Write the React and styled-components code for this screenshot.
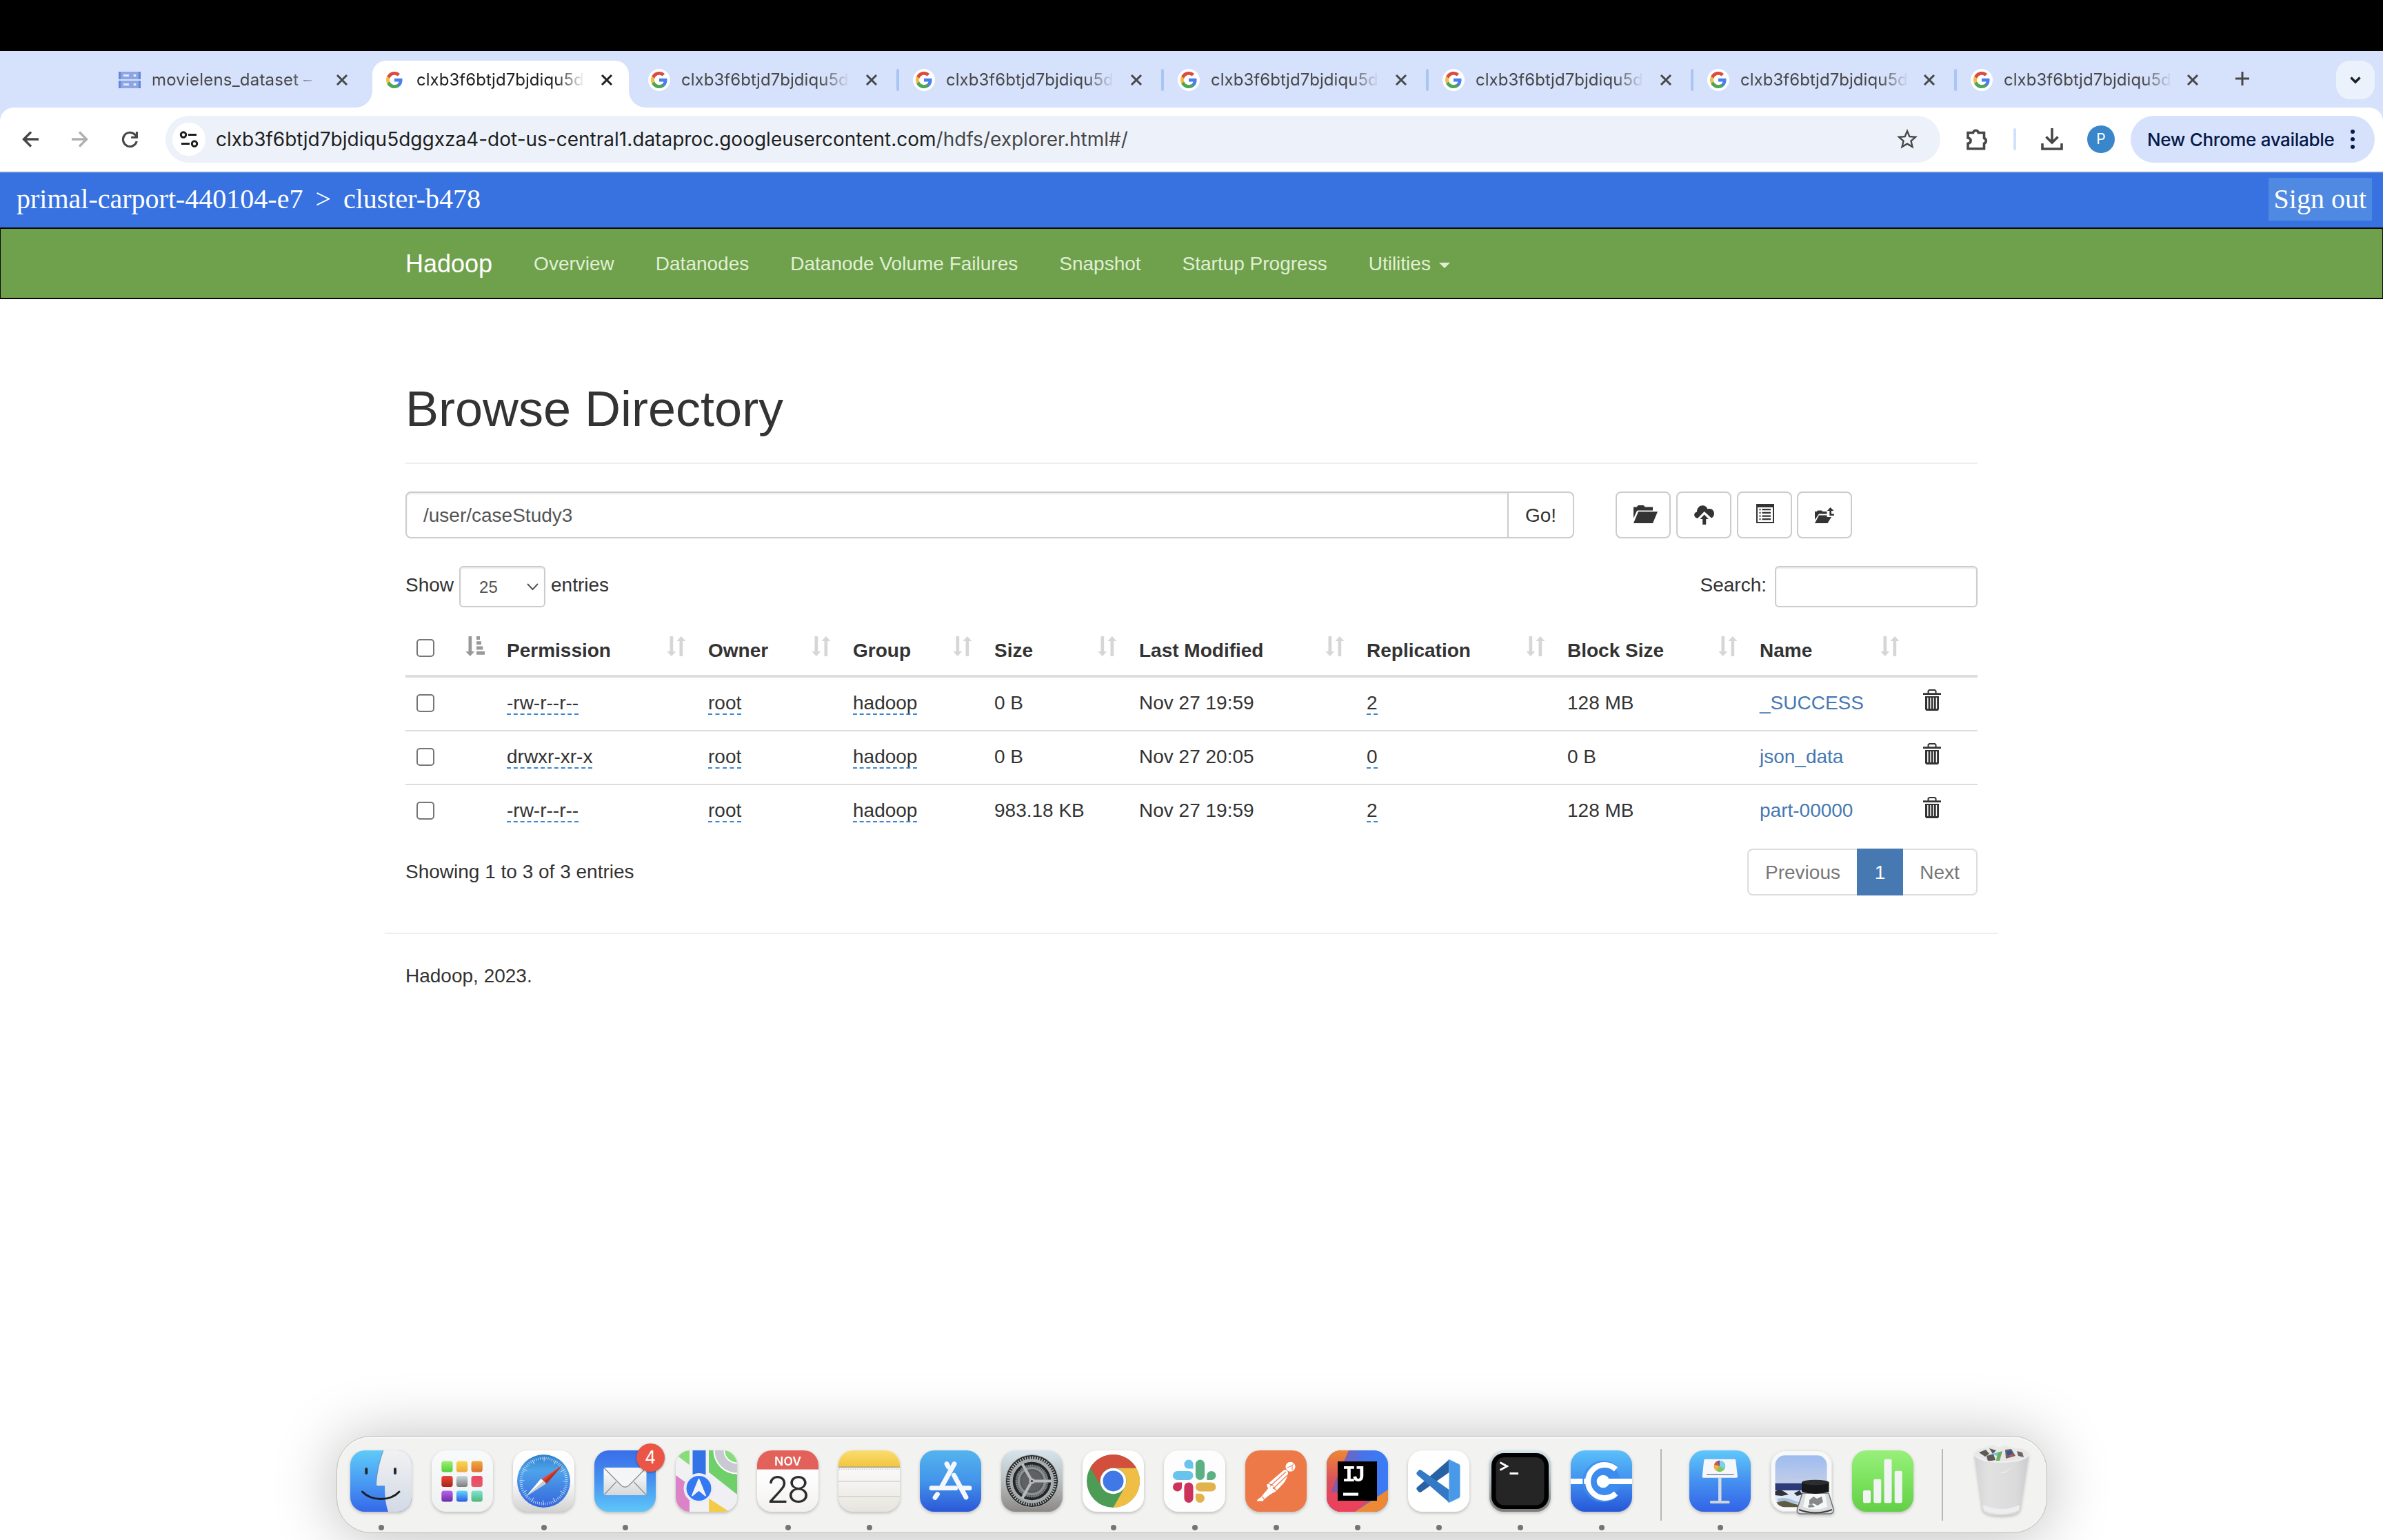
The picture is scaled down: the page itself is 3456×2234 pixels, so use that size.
import React from "react";
import styled, { createGlobalStyle, css } from "styled-components";

const sans = `"Liberation Sans", Arial, sans-serif`;
const system = `Inter, "Liberation Sans", sans-serif`;
const serif = `"Liberation Serif", "Times New Roman", serif`;

const GlobalStyle = createGlobalStyle`
  *, *::before, *::after { box-sizing: border-box; }
  body { margin: 0; background: #fff; color: #333; font: 28px/41px ${sans}; }
  svg { display: block; flex: none; overflow: visible; }
`;

const Screen = styled.div`
  display: flex;
  flex-direction: column;
  height: 2234px;
  overflow: hidden;
`;

const MenuBar = styled.div`
  flex: none;
  height: 74px;
  background: #000;
`;

/* ---------- browser chrome ---------- */

const TabStrip = styled.div`
  flex: none;
  display: flex;
  height: 82px;
  padding: 14px 12px 0 150px;
  background: #d6e1fb;
  font-family: ${system};
`;

const Tab = styled.div`
  position: relative;
  isolation: isolate;
  display: flex;
  align-items: center;
  width: ${(p) => p.$width}px;
  height: 56px;
  color: ${(p) => (p.$active ? "#1f1f1f" : "#474747")};
  ${(p) =>
    p.$active &&
    css`
      &::before {
        content: "";
        position: absolute;
        z-index: -1;
        inset: 0 6px -12px;
        border-radius: 20px 20px 0 0;
        background: #fff;
      }
      &::after {
        content: "";
        position: absolute;
        z-index: -2;
        inset: auto -18px -12px;
        height: 24px;
        background:
          radial-gradient(circle at 0 0, transparent 23.5px, #fff 24px) left / 24px 24px no-repeat,
          radial-gradient(circle at 100% 0, transparent 23.5px, #fff 24px) right / 24px 24px no-repeat;
      }
    `}
`;

const Divider = styled.span`
  flex: none;
  width: 4px;
  height: 32px;
  margin-left: -2px;
  border-radius: 2px;
  background: ${(p) => (p.$visible ? "#a9c5f7" : "transparent")};
`;

const Favicon = styled.span`
  flex: none;
  display: grid;
  place-items: center;
  width: 32px;
  height: 32px;
  margin: 0 16px 0 20px;
  border-radius: 50%;
  background: ${(p) => (p.$plain ? "transparent" : "#fff")};
`;

const TabTitle = styled.span`
  flex: none;
  width: 244px;
  overflow: hidden;
  white-space: nowrap;
  font-size: 24px;
  line-height: 32px;
  letter-spacing: ${(p) => p.$spacing}px;
  padding-bottom: 1px;
  mask-image: linear-gradient(to right, #000 calc(100% - 42px), transparent);
`;

const TabClose = styled.span`
  display: grid;
  margin: 0 30px 0 auto;
`;

const NewTab = styled.span`
  display: grid;
  place-items: center;
  width: 67px;
  height: 52px;
`;

const TabSearch = styled.span`
  display: grid;
  place-items: center;
  width: 56px;
  height: 56px;
  margin-left: auto;
  border-radius: 20px;
  background: #ebf2fc;
`;

const ToolbarBack = styled.div`
  flex: none;
  background: #d6e1fb;
`;

const Toolbar = styled.div`
  display: flex;
  align-items: center;
  height: 94px;
  padding: 0 12px 0 32px;
  border-bottom: 2px solid #e1e3e1;
  border-radius: 20px 20px 0 0;
  background: #fff;
  font-family: ${system};
`;

const ToolButton = styled.span`
  flex: none;
  display: grid;
  place-items: center;
  width: ${(p) => p.$width}px;
`;

const Omnibox = styled.div`
  display: flex;
  align-items: center;
  width: 2574px;
  height: 68px;
  margin-left: 39px;
  padding: 0 30px 0 10px;
  border-radius: 34px;
  background: #edf2fa;
`;

const SiteInfo = styled.span`
  display: grid;
  place-items: center;
  width: 48px;
  height: 48px;
  margin-right: 15px;
  border-radius: 50%;
  background: #fff;
`;

const Url = styled.span`
  flex: 1;
  font-size: 28px;
  color: #1f1f1f;
`;

const UrlPath = styled.span`
  color: #474747;
`;

const ToolDivider = styled.span`
  width: 4px;
  height: 32px;
  border-radius: 2px;
  background: #d3e0fb;
`;

const Avatar = styled.span`
  display: grid;
  place-items: center;
  width: 40px;
  height: 40px;
  border-radius: 50%;
  background: #3a86cb;
  color: #fff;
  font-size: 21px;
  line-height: 40px;
`;

const UpdatePill = styled.span`
  display: flex;
  align-items: center;
  justify-content: space-between;
  width: 354px;
  height: 68px;
  margin-left: auto;
  padding: 0 29px 0 24px;
  border-radius: 34px;
  background: #d6e1fb;
  color: #061a48;
  font-size: 26px;
  font-weight: 500;
  letter-spacing: -0.33px;
  white-space: nowrap;
`;

/* ---------- proxied page header ---------- */

const GatewayBar = styled.header`
  flex: none;
  display: flex;
  align-items: center;
  justify-content: space-between;
  height: 80px;
  padding: 0 16px 2px 24px;
  background: #3872e0;
  color: #fff;
  font: 40px/62px ${serif};
`;

const Breadcrumb = styled.div`
  display: flex;
  gap: 18px;
`;

const SignOut = styled.a`
  padding: 0 8px;
  background: #5089e1;
`;

const Navbar = styled.nav`
  flex: none;
  display: flex;
  align-items: center;
  height: 104px;
  padding-left: 586px;
  border: 2px solid #080808;
  border-width: 2px 1px;
  background: #6fa14c;
  color: #e0efd4;
`;

const Brand = styled.a`
  margin-right: 60px;
  padding-left: 1px;
  color: #fff;
  font-size: 36px;
`;

const NavLink = styled.a`
  display: flex;
  align-items: center;
  gap: 12px;
  margin-right: 60px;
`;

const Caret = styled.span`
  margin-top: 6px;
  border: 8px solid transparent;
  border-top-color: currentColor;
  border-bottom: 0;
`;

/* ---------- page body ---------- */

const Container = styled.main`
  flex: none;
  width: 2340px;
  margin: 0 auto;
  padding: 120px 30px 0;
`;

const PageTitle = styled.h1`
  margin: 0 0 40px;
  padding-bottom: 38px;
  border-bottom: 2px solid #eee;
  font-size: 72px;
  font-weight: 400;
  line-height: 79px;
`;

const PathRow = styled.div`
  display: flex;
  height: 68px;
`;

const field = css`
  border: 2px solid #ccc;
  background: #fff;
  box-shadow: inset 0 2px 2px rgba(0, 0, 0, 0.075);
  color: #555;
`;

const PathField = styled.div`
  ${field}
  width: 1600px;
  padding: 12px 24px;
  border-radius: 8px 0 0 8px;
`;

const GoButton = styled.button`
  width: 97px;
  margin: 0 60px 0 -2px;
  padding: 1px 0 0;
  border: 2px solid #ccc;
  border-radius: 0 8px 8px 0;
  background: #fff;
  color: #333;
  font: 28px/41px ${sans};
`;

const IconButton = styled.button`
  display: grid;
  place-items: start center;
  width: 80px;
  margin-right: ${(p) => p.$gap || 8}px;
  padding: ${(p) => p.$top}px 0 0 ${(p) => p.$left || 0}px;
  border: 2px solid #ccc;
  border-radius: 8px;
  background: #fff;
`;

const ControlsRow = styled.div`
  display: flex;
  justify-content: space-between;
  margin: 40px 0 26px;
`;

const ControlLabel = styled.label`
  display: flex;
  align-items: flex-start;
  gap: ${(p) => p.$gap}px;
`;

const LabelText = styled.span`
  margin-top: 7px;
`;

const LengthSelect = styled.span`
  ${field}
  display: flex;
  align-items: center;
  justify-content: space-between;
  width: 125px;
  height: 60px;
  padding: 0 8px 0 27px;
  border-radius: 6px;
  font-size: 24px;
`;

const SearchField = styled.span`
  ${field}
  width: 294px;
  height: 60px;
  border-radius: 6px;
`;

const columns = "131px 292px 210px 205px 210px 330px 291px 279px 235px 97px";

const HeadRow = styled.div`
  display: grid;
  grid-template-columns: ${columns};
  height: 76px;
  border-bottom: 4px solid #ddd;
  font-weight: 700;
`;

const HeadCell = styled.div`
  display: flex;
  justify-content: space-between;
  padding: 16px 16px 0 16px;
`;

const Row = styled.div`
  display: grid;
  grid-template-columns: ${columns};
  height: ${(p) => (p.$first ? 76 : 78)}px;
  border-top: ${(p) => (p.$first ? 0 : 2)}px solid #ddd;
`;

const Cell = styled.div`
  padding: 16px 0 0 16px;
`;

const TrashCell = styled.div`
  padding: 17px 0 0 18px;
`;

const Checkbox = styled.span`
  display: block;
  width: 26px;
  height: 26px;
  margin-top: ${(p) => p.$top}px;
  border: 2px solid #767676;
  border-radius: 5px;
  background: #fff;
`;

const Editable = styled.span`
  display: inline-block;
  height: 38px;
  border-bottom: 2px dashed #3a86cf;
`;

const FileLink = styled.a`
  color: #4678b2;
`;

const TableFooter = styled.div`
  display: flex;
  justify-content: space-between;
  padding: 16px 0 54px;
`;

const Info = styled.div`
  padding-top: 13px;
`;

const Pagination = styled.div`
  display: flex;
`;

const PageButton = styled.a`
  width: ${(p) => p.$width}px;
  height: 68px;
  border: 2px solid ${(p) => (p.$active ? "#4678b2" : "#ddd")};
  border-left-width: ${(p) => (p.$side === "right" ? 0 : 2)}px;
  border-right-width: ${(p) => (p.$side === "left" ? 0 : 2)}px;
  border-radius: ${(p) => (p.$side === "left" ? "8px 0 0 8px" : p.$side === "right" ? "0 8px 8px 0" : "0")};
  background: ${(p) => (p.$active ? "#4678b2" : "#fff")};
  color: ${(p) => (p.$active ? "#fff" : "#777")};
  line-height: 66px;
  text-align: center;
`;

const Footer = styled.footer`
  margin: 0 -30px;
  padding: 40px 30px 0;
  border-top: 2px solid #eee;
`;

/* ---------- dock ---------- */

const DockBar = styled.div`
  flex: none;
  display: flex;
  width: 2481px;
  height: 141px;
  margin: auto auto 10px;
  padding-left: 5px;
  border: 1px solid #bebebc;
  border-radius: 50px;
  background: #f2f2f0;
  box-shadow: inset 0 2px 1px #fafaf9, 0 4px 90px rgba(0, 0, 0, 0.27);
`;

const DockSlot = styled.div`
  position: relative;
  display: flex;
  flex-direction: column;
  align-items: center;
  width: 118px;
  padding-top: ${(p) => p.$top || 20}px;
  svg { filter: drop-shadow(0 2px 2px rgba(0, 0, 0, 0.22)); }
`;

const RunningDot = styled.span`
  width: 8px;
  height: 8px;
  margin-top: 19px;
  border-radius: 50%;
  background: #757573;
`;

const DockDivider = styled.span`
  width: 2px;
  height: 104px;
  margin: 18px 26px 0;
  background: #b7b7b5;
`;

const Badge = styled.span`
  position: absolute;
  top: 10px;
  left: 75px;
  width: 41px;
  height: 41px;
  border-radius: 50%;
  background: #ea5546;
  box-shadow: 0 1px 3px rgba(0, 0, 0, 0.4);
  color: #fff;
  font: 25px/41px ${system};
  text-align: center;
`;

/* ---------- small icons ---------- */

const Line = ({ w = 24, h = 24, color = "#474747", sw = 3.4, d, box }) => (
  <svg width={w} height={h} viewBox={box || `0 0 ${w} ${h}`} fill="none" stroke={color} strokeWidth={sw}>
    <path d={d} />
  </svg>
);

const GoogleG = () => (
  <svg width="24" height="24" viewBox="1 1 22 22">
    <path fill="#4a80ee" d="M22.56 12.25c0-.78-.07-1.53-.2-2.25H12v4.26h5.92c-.26 1.37-1.04 2.53-2.21 3.31v2.77h3.57c2.08-1.92 3.28-4.74 3.28-8.09z" />
    <path fill="#50a556" d="M12 23c2.97 0 5.46-.98 7.28-2.66l-3.57-2.77c-.98.66-2.23 1.06-3.71 1.06-2.86 0-5.29-1.93-6.16-4.53H2.18v2.84C3.99 20.53 7.7 23 12 23z" />
    <path fill="#f4bd42" d="M5.84 14.09c-.22-.66-.35-1.36-.35-2.09s.13-1.43.35-2.09V7.07H2.18C1.43 8.55 1 10.22 1 12s.43 3.45 1.18 4.93l2.85-2.22.81-.62z" />
    <path fill="#db4c3e" d="M12 5.38c1.62 0 3.06.56 4.21 1.64l3.15-3.15C17.45 2.09 14.97 1 12 1 7.7 1 3.99 3.47 2.18 7.07l3.66 2.84c.87-2.6 3.3-4.53 6.16-4.53z" />
  </svg>
);

const ServerIcon = () => (
  <svg width="32" height="24" viewBox="0 0 32 24">
    {[0, 13].map((y) => (
      <g key={y}>
        <rect y={y} width="32" height="11" fill="#8da5e3" />
        <rect y={y} width="3" height="11" fill="#6286d9" />
        <rect x="29" y={y} width="3" height="11" fill="#6286d9" />
        <rect x="7" y={y + 4} width="8" height="3" fill="#e3eafb" />
        <circle cx="23.5" cy={y + 5.5} r="2" fill="#e3eafb" />
      </g>
    ))}
  </svg>
);

const ReloadIcon = () => (
  <svg width="25" height="25" viewBox="0 0 26 26" fill="none" stroke="#474747" strokeWidth="3.2">
    <path d="M23.2 15.5A10.5 10.5 0 1 1 20.6 5.6L23 8" />
    <path d="M23.3 1v8.6h-8.6" />
  </svg>
);

const TuneIcon = () => (
  <svg width="26" height="24" viewBox="0 0 26 24" fill="none" stroke="#1f1f1f" strokeWidth="3">
    <circle cx="5" cy="5.5" r="3.7" />
    <path d="M12 5.5h12M2 18.500h12" />
    <circle cx="21" cy="18.5" r="3.7" />
  </svg>
);

const StarIcon = () => (
  <svg width="36" height="36" viewBox="0 0 24 24" fill="#474747">
    <path d="M22 9.24l-7.19-.62L12 2 9.19 8.63 2 9.24l5.46 4.73L5.82 21 12 17.27 18.18 21l-1.63-7.03L22 9.240zM12 15.4l-3.76 2.27 1-4.28-3.32-2.88 4.38-.38L12 6.1l1.71 4.04 4.38.38-3.32 2.88 1 4.28L12 15.4z" />
  </svg>
);

const PuzzleIcon = () => (
  <Line w={32} h={32} sw={3.6} d="M3 6.500h7.500a4 4.200 0 0 1 7.800 0H26.500v8a4 4 0 0 1 0 7.600V29.800H3v-7.500c5.500-1 5.500-7.400 0-8.400z" />
);

const DownloadIcon = () => <Line w={32} h={32} sw={3.6} d="M16 0v20M7.500 12.500L16 21l8.500-8.500M2 22v8h28v-8" />;

const DotsIcon = () => (
  <svg width="6" height="28" viewBox="0 0 6 28" fill="#061a48">
    <circle cx="3" cy="3" r="3" />
    <circle cx="3" cy="14" r="3" />
    <circle cx="3" cy="25" r="3" />
  </svg>
);

const FolderOpen = () => (
  <svg width="35" height="26" viewBox="0 0 35 26" fill="#333">
    <path d="M0 19V2.500h5Q5.500 0 7.500 0h6.500q2 0 2.500 2.500H28V7.500H6.500Q5 7.500 4.500 9z" />
    <path d="M7 9.300H35L28 26H0z" />
  </svg>
);

const CloudUpload = () => (
  <svg width="29" height="28" viewBox="0 0 29 28" fill="#333">
    <path d="M5 19C-1 18-1.500 10.500 4 9.500 4-.5 16-3 19.500 5.500 25.500 3.500 29 8 29 11.500c0 3.500-1.500 6-4 7L14.700 9 5 19z" />
    <path d="M14.700 13.500l6.200 6.500h-3.700v8h-5v-8H8.500z" />
  </svg>
);

const ListAlt = () => (
  <svg width="26" height="28" viewBox="0 0 26 28">
    <path fill="#333" d="M0 0h26v28H0z" />
    <path fill="#fff" d="M2 5h22v21H2z" />
    <path fill="#333" d="M4.500 7h2v2.300h-2zM8.500 7H21v2.300H8.500zM4.500 11.700h2V14h-2zM8.500 11.700H21V14H8.500zM4.500 16.400h2v2.300h-2zM8.500 16.400H21v2.300H8.500zM4.500 21h2v2.300h-2zM8.500 21H21v2.300H8.500z" />
  </svg>
);

const FolderUp = () => (
  <svg width="28" height="23" viewBox="0 0 28 23" fill="#333">
    <path d="M0 18V6h3q.5-1.500 1.500-1.500h5q1.200 0 1.700 1.500h6.300v3.500H6z" />
    <path d="M6 11.500h11.500v2.500H24L18.500 23H0z" />
    <path d="M22.500 0l5 5h-3.500v4.500h3.800V12h-6.500V5h-3.500z" />
  </svg>
);

const SortIcon = () => (
  <svg width="28" height="29" viewBox="0 0 28 29" fill="#d6d6d6">
    <path d="M4.500 0H9.200v22H13.300L6.800 29 .3 22h4.200zM18.500 29h4.700V7h4.200L20.900 0 14.400 7h4.100z" />
  </svg>
);

const SortAscIcon = () => (
  <svg width="28" height="29" viewBox="0 0 28 29" fill="#999">
    <path d="M4.500 0H9.200v22H13.300L6.800 29 .3 22h4.200zM16 0h5v5h-5zM16 7.300h7v5h-7zM16 14.500h9.300v5H16zM16 21.800h12v5H16z" />
  </svg>
);

const TrashIcon = () => (
  <svg width="26" height="31" viewBox="0 0 26 31">
    <path fill="none" stroke="#333" strokeWidth="2" d="M7.500 6V2.500L9 1h8l1.500 1.500V6" />
    <path fill="#333" d="M0 5.200h26V8H0zM3 10h20v19l-1.500 2h-17L3 29z" />
    <path stroke="#fff" strokeWidth="1.500" d="M6.800 12v16M11 12v16M15.200 12v16M19.400 12v16" />
  </svg>
);

/* ---------- dock icons ---------- */

const Tile = ({ id, stops, fill, children, text }) => (
  <svg width="89" height="89" viewBox="0 0 89 89">
    <defs>
      <clipPath id={`${id}-clip`}>
        <rect width="89" height="89" rx="21" />
      </clipPath>
      {stops && (
        <linearGradient id={`${id}-bg`} x2="0" y2="1">
          {stops.map((s, i) => (
            <stop key={i} offset={i / (stops.length - 1)} stopColor={s} />
          ))}
        </linearGradient>
      )}
    </defs>
    <g clipPath={`url(#${id}-clip)`}>
      <rect width="89" height="89" fill={stops ? `url(#${id}-bg)` : fill} />
      {children}
    </g>
    {text}
  </svg>
);

const Finder = () => (
  <Tile id="finder" stops={["#5fcaf8", "#4a9cf3", "#3568ea"]}>
    <linearGradient id="finder-face" x2="0" y2="1">
      <stop stopColor="#f1f1f3" />
      <stop offset="1" stopColor="#d2dae6" />
    </linearGradient>
    <path d="M48 0C42 16 38 35 37.500 50q0 1.800 2 1.800H50C50 66 51.500 79 55 89H89V0z" fill="url(#finder-face)" />
    <path d="M48 0C42 16 38 35 37.500 50q0 1.800 2 1.800H50" fill="none" stroke="#3d6c9c" strokeWidth=".6" />
    <path d="M23.300 27v6M65 27v6" stroke="#23292f" strokeWidth="4" strokeLinecap="round" />
    <path d="M17.500 60C31 74 58 74 71 60" fill="none" stroke="#1b1f24" strokeWidth="3" strokeLinecap="round" />
  </Tile>
);

const launchColors = [
  ["#9df072", "#54cf3c"], ["#f7d850", "#efa93a"], ["#f0ab3d", "#dd7031"],
  ["#e8483b", "#a92418"], ["#ccd6dc", "#7b7d7d"], ["#ea4662", "#e65b6a"],
  ["#ba63e8", "#6a2da8"], ["#62d6fb", "#2c5be2"], ["#7fe3d3", "#4fb679"],
];

const Launchpad = () => (
  <Tile id="launch" stops={["#f8fafb", "#f0f1f1"]}>
    {launchColors.map(([a, b], i) => (
      <g key={i}>
        <linearGradient id={`lp${i}`} x2="0" y2="1">
          <stop stopColor={a} />
          <stop offset="1" stopColor={b} />
        </linearGradient>
        <rect x={14.300 + (i % 3) * 21.600} y={15.500 + Math.floor(i / 3) * 21.500} width="16.300" height="16" rx="3.500" fill={`url(#lp${i})`} />
      </g>
    ))}
  </Tile>
);

const Safari = () => (
  <Tile id="safari" stops={["#ffffff", "#fbfbfb", "#d2d2d2"]}>
    <linearGradient id="safari-dial" x2="0" y2="1">
      <stop stopColor="#2f7fcb" />
      <stop offset=".3" stopColor="#4ea3ea" />
      <stop offset="1" stopColor="#3565dc" />
    </linearGradient>
    <circle cx="44.500" cy="44.500" r="38.500" fill="url(#safari-dial)" />
    <circle cx="44.500" cy="44.500" r="33" fill="none" stroke="#cfe2f7" strokeWidth="4" strokeDasharray=".8 2.080" />
    <circle cx="44.500" cy="44.500" r="31.500" fill="none" stroke="#cfe2f7" strokeWidth="7" strokeDasharray=".9 15.590" />
    <path d="M71.500 21.700L40 42.500l4.500 2z" fill="#ec6150" />
    <path d="M71.500 21.700L47.500 49.500l-7-6.500z" fill="#df4433" />
    <path d="M71.500 21.700L48 49l-3.500-4z" fill="#b23127" />
    <path d="M18.400 67.300L40.500 41l4 3.500z" fill="#fff" />
    <path d="M18.400 67.300L48.500 48l-4-3.800z" fill="#c6ccd6" />
  </Tile>
);

const Mail = () => (
  <Tile id="mail" stops={["#3a6de9", "#4693f0", "#5fc6f9"]}>
    <linearGradient id="mail-paper" x2="0" y2="1">
      <stop stopColor="#ffffff" />
      <stop offset="1" stopColor="#d5d7d9" />
    </linearGradient>
    <rect x="13.500" y="25" width="62" height="40" rx="3" fill="url(#mail-paper)" />
    <path d="M14.500 64l17-18M74.500 64l-17-18" stroke="#8d8f92" strokeWidth="1.200" />
    <path d="M14.500 26L39 51q5.500 4.500 11 0L74.500 26" fill="#f5f5f5" stroke="#8d8f92" strokeWidth="1.400" />
  </Tile>
);

const Maps = () => (
  <Tile id="maps" fill="#f1f1f4">
    <path d="M0 0H21V22L0 6z" fill="#88dd7a" />
    <path d="M46 0H89V66L46 32z" fill="#6fd069" />
    <path d="M0 36L22 52V89H0z" fill="#dc82c6" />
    <path d="M47 69L78 89H47z" fill="#f3cb48" />
    <path d="M46 30L89 64V89H80L46 62z" fill="#efeff4" />
    <circle cx="89" cy="0" r="26" fill="none" stroke="#fff" strokeWidth="17" />
    <circle cx="89" cy="0" r="26" fill="none" stroke="#c9c9d4" strokeWidth="13" />
    <circle cx="89" cy="0" r="17" fill="#88dd7a" />
    <path d="M20 0H48V89H20z" fill="#f1f1f4" />
    <path d="M24.500 0H43.500V50H24.500z" fill="#3273e6" />
    <circle cx="33.500" cy="55" r="22" fill="#eceef5" />
    <circle cx="33.500" cy="55" r="18" fill="#3478f2" />
    <path d="M33.500 42L43 65.500l-9.500-8-9.500 8z" fill="#f2f3f6" stroke="#f2f3f6" strokeWidth="2" strokeLinejoin="round" />
  </Tile>
);

const Calendar = () => (
  <Tile
    id="cal"
    stops={["#ffffff", "#fcfcfc", "#f2f1ee"]}
    text={
      <g textAnchor="middle" fontFamily={system}>
        <text x="44.500" y="21.500" fontSize="17.500" fontWeight="600" fill="#fff">NOV</text>
        <text x="43.500" y="75.500" fontSize="54" fontWeight="300" letterSpacing="-3" fill="#2d2d2d">28</text>
      </g>
    }
  >
    <rect width="89" height="27.600" fill="#e2615a" />
  </Tile>
);

const Notes = () => (
  <Tile id="notes" stops={["#ffffff", "#f5f4f1", "#e6e4dd"]}>
    <linearGradient id="notes-top" x2="0" y2="1">
      <stop stopColor="#f9dd70" />
      <stop offset="1" stopColor="#f3c63e" />
    </linearGradient>
    <rect width="89" height="23.500" fill="url(#notes-top)" />
    <rect y="23.300" width="89" height="1.700" fill="#a99f7c" />
    <path d="M1 27.200H89" stroke="#b8b6b0" strokeWidth="1.300" strokeDasharray="1.300 2" />
    <path d="M0 44.700H89M0 66.700H89" stroke="#d2d1cd" strokeWidth="1.600" />
  </Tile>
);

const AppStore = () => (
  <Tile id="store" stops={["#54b4ee", "#4394ea", "#2b58d8"]}>
    <g stroke="#f4f8fd" strokeWidth="6.800" strokeLinecap="round" fill="none">
      <path d="M39 19.500L41.500 24M49.500 36l17.500 32" />
      <path d="M50 19.500L31 54M25.500 63.500L22 68.500" />
      <path d="M17 54.700H52M62 54.700H72" />
    </g>
  </Tile>
);

const Settings = () => (
  <Tile id="settings" stops={["#d6e5ec", "#b9bfc1", "#8b8884"]}>
    <circle cx="44.500" cy="44.500" r="38.500" fill="#a4a8a9" />
    <circle cx="44.500" cy="44.500" r="37.500" fill="#242526" />
    <circle cx="44.500" cy="44.500" r="34" fill="none" stroke="#b4babc" strokeWidth="4" strokeDasharray="1.700 1.860" />
    <circle cx="44.500" cy="44.500" r="30" fill="none" stroke="#a7acad" strokeWidth="4.500" />
    <circle cx="44.500" cy="44.500" r="23.500" fill="#55585a" />
    <circle cx="44.500" cy="44.500" r="22.500" fill="none" stroke="#85898a" strokeWidth="3" strokeDasharray="1.500 1.200" />
    <circle cx="44.500" cy="44.500" r="19" fill="none" stroke="#8c9091" strokeWidth="3.500" />
    <circle cx="44.500" cy="44.500" r="15" fill="#5f6162" />
    <path d="M44.500 44.500H73M44.500 44.500L30.500 19.500M44.500 44.500L30.500 69.500" stroke="#b6bbbd" strokeWidth="4" />
    <circle cx="44.500" cy="44.500" r="4" fill="#b6bbbd" />
    <circle cx="44.500" cy="44.500" r="1.600" fill="#333" />
  </Tile>
);

const Chrome = () => (
  <Tile id="chrome" fill="#fff">
    <circle cx="44.500" cy="44.500" r="38.500" fill="#4d9c55" />
    <path d="M44.500 25.500H78A38.500 38.500 0 0 1 44.500 83L61 54A19 19 0 0 0 44.500 25.500z" fill="#f0bd45" />
    <path d="M28 54L11.300 25A38.500 38.500 0 0 1 78 25.500H44.500A19 19 0 0 0 28 54z" fill="#d24e3d" />
    <circle cx="44.500" cy="44.500" r="18.800" fill="#fff" />
    <circle cx="44.500" cy="44.500" r="15" fill="#4078e6" />
  </Tile>
);

const Slack = () => (
  <Tile id="slack" fill="#fdfdfd">
    <g transform="translate(13 13.500) scale(2.600)">
      <path fill="#cb335a" d="M5.042 15.165a2.528 2.528 0 0 1-2.520 2.523A2.528 2.528 0 0 1 0 15.165a2.527 2.527 0 0 1 2.522-2.520h2.520v2.520zM6.313 15.165a2.527 2.527 0 0 1 2.521-2.520 2.527 2.527 0 0 1 2.521 2.520v6.313A2.528 2.528 0 0 1 8.834 24a2.528 2.528 0 0 1-2.521-2.522v-6.313z" />
      <path fill="#68c4ec" d="M8.834 5.042a2.528 2.528 0 0 1-2.521-2.520A2.528 2.528 0 0 1 8.834 0a2.528 2.528 0 0 1 2.521 2.522v2.520H8.834zM8.834 6.313a2.528 2.528 0 0 1 2.521 2.521 2.528 2.528 0 0 1-2.521 2.521H2.522A2.528 2.528 0 0 1 0 8.834a2.528 2.528 0 0 1 2.522-2.521h6.312z" />
      <path fill="#5cb184" d="M18.956 8.834a2.528 2.528 0 0 1 2.522-2.521A2.528 2.528 0 0 1 24 8.834a2.528 2.528 0 0 1-2.522 2.521h-2.522V8.834zM17.688 8.834a2.528 2.528 0 0 1-2.523 2.521 2.527 2.527 0 0 1-2.520-2.521V2.522A2.527 2.527 0 0 1 15.165 0a2.528 2.528 0 0 1 2.523 2.522v6.312z" />
      <path fill="#e2b34d" d="M15.165 18.956a2.528 2.528 0 0 1 2.523 2.522A2.528 2.528 0 0 1 15.165 24a2.527 2.527 0 0 1-2.520-2.522v-2.522h2.520zM15.165 17.688a2.527 2.527 0 0 1-2.520-2.523 2.526 2.526 0 0 1 2.520-2.520h6.313A2.527 2.527 0 0 1 24 15.165a2.528 2.528 0 0 1-2.522 2.523h-6.313z" />
    </g>
  </Tile>
);

const Postman = () => (
  <Tile id="postman" fill="#ed7848">
    <circle cx="65.500" cy="23.700" r="7" fill="#fff" />
    <path d="M61 25l7-3 3.500-4.500M68 22v7" stroke="#ed7848" strokeWidth="1" fill="none" />
    <path d="M56 28.500q5-1 6 4-1 8-6 14.500L45 59l-9 5-10 8 .5 1.500h-10l2-3 3.500-2L33 55.500l-2-5.500z" fill="#fff" />
    <path d="M59 31L36 52M61 36L40 56M33 48l8 3M40 53l6 6M24 67l3 3" stroke="#ed7848" strokeWidth="1.200" fill="none" />
  </Tile>
);

const IntelliJ = () => (
  <Tile
    id="ij"
    fill="#3a7cf6"
    text={
      <text x="22.500" y="45" fontFamily={`"Liberation Mono", monospace`} fontWeight="700" fontSize="33" letterSpacing="-5.500" fill="#fff">IJ</text>
    }
  >
    <linearGradient id="ij-left" x2="0" y2="1">
      <stop stopColor="#ee8733" />
      <stop offset=".5" stopColor="#d9505f" />
      <stop offset="1" stopColor="#ee3e5b" />
    </linearGradient>
    <linearGradient id="ij-mid" x2="1">
      <stop stopColor="#a3508e" />
      <stop offset=".6" stopColor="#4574ea" />
      <stop offset="1" stopColor="#3a7cf6" />
    </linearGradient>
    <rect width="89" height="89" fill="url(#ij-mid)" />
    <path d="M0 0H32L6 60l60 10L41 89H0z" fill="url(#ij-left)" />
    <path d="M89 57L41 89H89z" fill="#ee8834" />
    <rect x="16" y="16" width="57" height="57" fill="#000" />
    <rect x="24" y="61.500" width="22" height="4.200" fill="#fff" />
  </Tile>
);

const VSCode = () => (
  <Tile id="vscode" fill="#fff">
    <path d="M59.500 13.500V32L19 60.500q-2 1-3.500-.5L12.700 57q-1.200-1.800.5-3.500z" fill="#2962a4" />
    <path d="M59.500 75.500V57L19 28.500q-2-1-3.500.5L12.700 32q-1.200 1.800.5 3.500z" fill="#3479c6" />
    <path d="M57 14l3-.8L74 20q1.500 1 1.500 3V66q0 2-1.500 3L60 75.800 57 75q2.500-.5 2.500-3.500v-54Q59.500 14.500 57 14z" fill="#4a99e9" />
  </Tile>
);

const Terminal = () => (
  <Tile id="term" stops={["#d5e5ec", "#a9b5ba", "#7d7a7a"]}>
    <rect x="3" y="4" width="83" height="81" rx="18" fill="#000" />
    <rect x="9.500" y="10" width="70" height="69.500" rx="12" fill="#252525" />
    <path d="M15.500 17.500L25.500 23l-10 5.500M29.500 33.500H42" fill="none" stroke="#fff" strokeWidth="3" />
  </Tile>
);

const CApp = () => (
  <Tile id="capp" stops={["#5ac0fa", "#4190ee", "#2656d9"]}>
    <rect y="41" width="89" height="8" fill="#fff" />
    <circle cx="47" cy="45" r="25" fill="#3c8bee" />
    <path d="M66 23A29 29 0 1 0 66 67" fill="none" stroke="#3f8eee" strokeWidth="2" />
    <path d="M50 41H89V49H50z" fill="#fff" />
    <path d="M65.500 27.500A24 24 0 1 0 65.500 62.500" fill="none" stroke="#fff" strokeWidth="8" />
    <circle cx="47" cy="45" r="9.300" fill="#fff" />
  </Tile>
);

const Keynote = () => (
  <Tile id="keynote" stops={["#5fc8fa", "#4590f0", "#3363e8"]}>
    <rect x="42" y="40" width="4.500" height="34" fill="#d5dbe4" />
    <rect x="30" y="73" width="28.500" height="4" rx="1.500" fill="#cfd4dc" />
    <path d="M23 12.700H65.500q1.500 0 1.800 1.500L70 38q0 1.800-1.800 1.800H20.500q-2 0-1.800-1.800L21.200 14.200q.3-1.500 1.800-1.500z" fill="#f6f7fb" />
    <path d="M25 35H64.500" stroke="#8fa3b8" strokeWidth="2" />
    <circle cx="44" cy="23" r="8.300" fill="#7ec85c" />
    <path d="M44 23V14.700A8.300 8.300 0 0 1 51 27z" fill="#7cd0f0" />
    <path d="M44 23L39 29.700A8.300 8.300 0 0 1 36 20.500z" fill="#efb243" />
    <path d="M44 23L36 20.500A8.300 8.300 0 0 1 39.500 16z" fill="#df5440" />
    <path d="M44 23L39.500 16A8.300 8.300 0 0 1 44 14.700z" fill="#8d4a9c" />
  </Tile>
);

const Preview = () => (
  <Tile
    id="preview"
    fill="#f8f8f8"
    text={
      <g>
        <path d="M46 62H84L91 85Q92 91.500 86 92H43Q37 91.500 38.500 85z" fill="#d9dbdc" stroke="#6f7274" strokeWidth="1.500" />
        <path d="M51 63H79L82 82Q65 89 47 82z" fill="#f6f7f7" />
        <path d="M56 72l6-5 5 3 7-3 2 8-8 5-6-3-6 2zM54 80l6-2 4 4-9 1z" fill="#85898c" />
        <path d="M41 86Q65 95 89 86" fill="none" stroke="#3c3e40" strokeWidth="2" />
        <path d="M45 46V60Q65 66 84.500 60V46z" fill="#17181a" />
        <ellipse cx="64.700" cy="46.500" rx="19.700" ry="3.800" fill="#2c2d2f" />
      </g>
    }
  >
    <linearGradient id="preview-sky" x2="0" y2="1">
      <stop stopColor="#9dbcf0" />
      <stop offset="1" stopColor="#c3cde8" />
    </linearGradient>
    <clipPath id="preview-photo">
      <rect x="6.500" y="7.300" width="75" height="75" rx="14" />
    </clipPath>
    <rect x=".5" y=".5" width="88" height="88" rx="21" fill="none" stroke="#e4e4e4" />
    <g clipPath="url(#preview-photo)">
      <rect x="6" y="7" width="76" height="41" fill="url(#preview-sky)" />
      <rect x="6" y="47.700" width="76" height="14" fill="#2e3b79" />
      <rect x="6" y="58" width="76" height="25" fill="#dfe8f4" />
      <path d="M6 60q6-5 12-1l8 5-10 2-10-1zM34 62l8-4 4 6-8 2z" fill="#2d323c" />
      <path d="M10 70q12-3 22 2t12 1v4H10z" fill="#a9c2dc" />
      <path d="M6 76l14-3 12 4 8 2v4H6z" fill="#5f5a44" />
    </g>
  </Tile>
);

const Numbers = () => (
  <Tile id="numbers" stops={["#98f07a", "#7be25e", "#62cf45"]}>
    {[[16, 58], [31.300, 41.700], [46.500, 12.700], [61.700, 29.700]].map(([x, y]) => (
      <rect key={x} x={x} y={y} width="11" height={76.300 - y} rx="2" fill="#f1f3f5" />
    ))}
  </Tile>
);

const TrashBin = () => (
  <svg width="80" height="102" viewBox="0 0 80 102">
    <linearGradient id="bin" x2="1">
      <stop stopColor="#d3d4d6" />
      <stop offset=".25" stopColor="#e2e1e1" />
      <stop offset=".75" stopColor="#dcdbdb" />
      <stop offset="1" stopColor="#cacdd1" />
    </linearGradient>
    <path d="M1 14Q4 5 16 4L27 0l8 4 10-3 8 3 14 1q10 2 12 9L66 24H14z" fill="#e8e8e8" />
    <path d="M1 14L12 92Q14 101 40 101.500 65 101 67 92L79 14Q70 24 40 24T1 14z" fill="url(#bin)" />
    <path d="M7 10l10-4 5 6-6 4zM22 4l10 3-5 5zM18 15l10-3 3 9-11 2z" fill="#5d5a58" />
    <path d="M45 6l9-1 6 10-14 4zM62 8l8 2 2 7-8-2z" fill="#6e6462" />
    <path d="M25 12l9-2-1 5z" fill="#6cc6ea" />
    <path d="M34 10l7-2-4 14-5 0z" fill="#6cae5c" />
    <path d="M47 9l6-2 3 5-7 3z" fill="#35559f" />
    <path d="M50 14l7-2-2 5z" fill="#c9592f" />
    <path d="M1 14Q10 24 40 24T79 14" fill="none" stroke="#f4f4f4" strokeWidth="1.500" />
    <path d="M13 86Q40 98 66 86L65 94Q40 104 14 94z" fill="#eceef0" />
    <path d="M32 40q16 0 24-12-6 10-14 12z" fill="#efefef" />
  </svg>
);

/* ---------- data ---------- */

const hostTitle = "clxb3f6btjd7bjdiqu5d";
const tabs = [
  { title: "movielens_dataset –", server: true },
  { title: hostTitle, active: true },
  { title: hostTitle },
  { title: hostTitle, divider: true },
  { title: hostTitle, divider: true },
  { title: hostTitle, divider: true },
  { title: hostTitle, divider: true, width: 382 },
  { title: hostTitle, divider: true, width: 382 },
];

const navLinks = ["Overview", "Datanodes", "Datanode Volume Failures", "Snapshot", "Startup Progress"];
const headings = ["Permission", "Owner", "Group", "Size", "Last Modified", "Replication", "Block Size", "Name"];

const files = [
  { perm: "-rw-r--r--", size: "0 B", date: "Nov 27 19:59", rep: "2", block: "128 MB", name: "_SUCCESS" },
  { perm: "drwxr-xr-x", size: "0 B", date: "Nov 27 20:05", rep: "0", block: "0 B", name: "json_data" },
  { perm: "-rw-r--r--", size: "983.18 KB", date: "Nov 27 19:59", rep: "2", block: "128 MB", name: "part-00000" },
];

const dock = [
  { icon: Finder, running: true },
  { icon: Launchpad },
  { icon: Safari, running: true },
  { icon: Mail, running: true, badge: "4" },
  { icon: Maps },
  { icon: Calendar, running: true },
  { icon: Notes, running: true },
  { icon: AppStore },
  { icon: Settings },
  { icon: Chrome, running: true },
  { icon: Slack, running: true },
  { icon: Postman, running: true },
  { icon: IntelliJ, running: true },
  { icon: VSCode, running: true },
  { icon: Terminal, running: true },
  { icon: CApp, running: true },
  { divider: true },
  { icon: Keynote, running: true },
  { icon: Preview },
  { icon: Numbers },
  { divider: true },
  { icon: TrashBin, top: 13 },
];

const BrowserTabs = () => (
  <TabStrip>
    {tabs.map((t, i) => (
      <Tab key={i} $active={t.active} $width={t.width || 384}>
        <Divider $visible={t.divider} />
        <Favicon $plain={t.active || t.server}>{t.server ? <ServerIcon /> : <GoogleG />}</Favicon>
        <TabTitle $spacing={t.server ? 0.2 : 0.04}>{t.title}</TabTitle>
        <TabClose>
          <Line w={16} h={16} sw={3} color={t.active ? "#1f1f1f" : "#474747"} d="M1 1l14 14M15 1L1 15" />
        </TabClose>
      </Tab>
    ))}
    <NewTab>
      <Line w={20} h={20} sw={3} d="M10 0v20M0 10h20" />
    </NewTab>
    <TabSearch>
      <Line w={16} h={10} sw={3.4} color="#1f1f1f" d="M1.500 1.500L8 8l6.500-6.500" />
    </TabSearch>
  </TabStrip>
);

const BrowserToolbar = () => (
  <ToolbarBack>
    <Toolbar>
      <ToolButton $width={24}><Line d="M24 12H3M13 1.500L2.500 12 13 22.500" /></ToolButton>
      <ToolButton $width={120}><Line color="#b0b0b0" d="M0 12h21M11 1.500L21.500 12 11 22.500" /></ToolButton>
      <ToolButton $width={25}><ReloadIcon /></ToolButton>
      <Omnibox>
        <SiteInfo><TuneIcon /></SiteInfo>
        <Url>
          clxb3f6btjd7bjdiqu5dggxza4-dot-us-central1.dataproc.googleusercontent.com
          <UrlPath>/hdfs/explorer.html#/</UrlPath>
        </Url>
        <StarIcon />
      </Omnibox>
      <ToolButton $width={106}><PuzzleIcon /></ToolButton>
      <ToolDivider />
      <ToolButton $width={103}><DownloadIcon /></ToolButton>
      <Avatar>P</Avatar>
      <UpdatePill>
        New Chrome available
        <DotsIcon />
      </UpdatePill>
    </Toolbar>
  </ToolbarBack>
);

const DirectoryTable = () => (
  <>
    <HeadRow>
      <HeadCell>
        <Checkbox $top={4} />
        <SortAscIcon />
      </HeadCell>
      {headings.map((h) => (
        <HeadCell key={h}>
          {h}
          <SortIcon />
        </HeadCell>
      ))}
    </HeadRow>
    {files.map((f, i) => (
      <Row key={f.name} $first={i === 0}>
        <Cell><Checkbox $top={8} /></Cell>
        <Cell><Editable>{f.perm}</Editable></Cell>
        <Cell><Editable>root</Editable></Cell>
        <Cell><Editable>hadoop</Editable></Cell>
        <Cell>{f.size}</Cell>
        <Cell>{f.date}</Cell>
        <Cell><Editable>{f.rep}</Editable></Cell>
        <Cell>{f.block}</Cell>
        <Cell><FileLink>{f.name}</FileLink></Cell>
        <TrashCell><TrashIcon /></TrashCell>
      </Row>
    ))}
  </>
);

const Dock = () => (
  <DockBar>
    {dock.map(({ icon: Icon, divider, running, badge, top }, i) =>
      divider ? (
        <DockDivider key={i} />
      ) : (
        <DockSlot key={i} $top={top}>
          <Icon />
          {running && <RunningDot />}
          {badge && <Badge>{badge}</Badge>}
        </DockSlot>
      )
    )}
  </DockBar>
);

export default function App() {
  return (
    <Screen>
      <GlobalStyle />
      <MenuBar />
      <BrowserTabs />
      <BrowserToolbar />
      <GatewayBar>
        <Breadcrumb>
          <span>primal-carport-440104-e7</span>
          <span>&gt;</span>
          <span>cluster-b478</span>
        </Breadcrumb>
        <SignOut>Sign out</SignOut>
      </GatewayBar>
      <Navbar>
        <Brand>Hadoop</Brand>
        {navLinks.map((l) => (
          <NavLink key={l}>{l}</NavLink>
        ))}
        <NavLink>
          Utilities
          <Caret />
        </NavLink>
      </Navbar>
      <Container>
        <PageTitle>Browse Directory</PageTitle>
        <PathRow>
          <PathField>/user/caseStudy3</PathField>
          <GoButton>Go!</GoButton>
          <IconButton $top={18} $left={6}><FolderOpen /></IconButton>
          <IconButton $top={18}><CloudUpload /></IconButton>
          <IconButton $top={16} $left={2} $gap={7}><ListAlt /></IconButton>
          <IconButton $top={21}><FolderUp /></IconButton>
        </PathRow>
        <ControlsRow>
          <ControlLabel $gap={8}>
            <LabelText>Show</LabelText>
            <LengthSelect>
              25
              <Line w={17} h={10} sw={2} color="#555" d="M1 1l7.500 8L16 1" />
            </LengthSelect>
            <LabelText>entries</LabelText>
          </ControlLabel>
          <ControlLabel $gap={12}>
            <LabelText>Search:</LabelText>
            <SearchField />
          </ControlLabel>
        </ControlsRow>
        <DirectoryTable />
        <TableFooter>
          <Info>Showing 1 to 3 of 3 entries</Info>
          <Pagination>
            <PageButton $side="left" $width={159}>Previous</PageButton>
            <PageButton $active $width={67}>1</PageButton>
            <PageButton $side="right" $width={108}>Next</PageButton>
          </Pagination>
        </TableFooter>
        <Footer>Hadoop, 2023.</Footer>
      </Container>
      <Dock />
    </Screen>
  );
}
